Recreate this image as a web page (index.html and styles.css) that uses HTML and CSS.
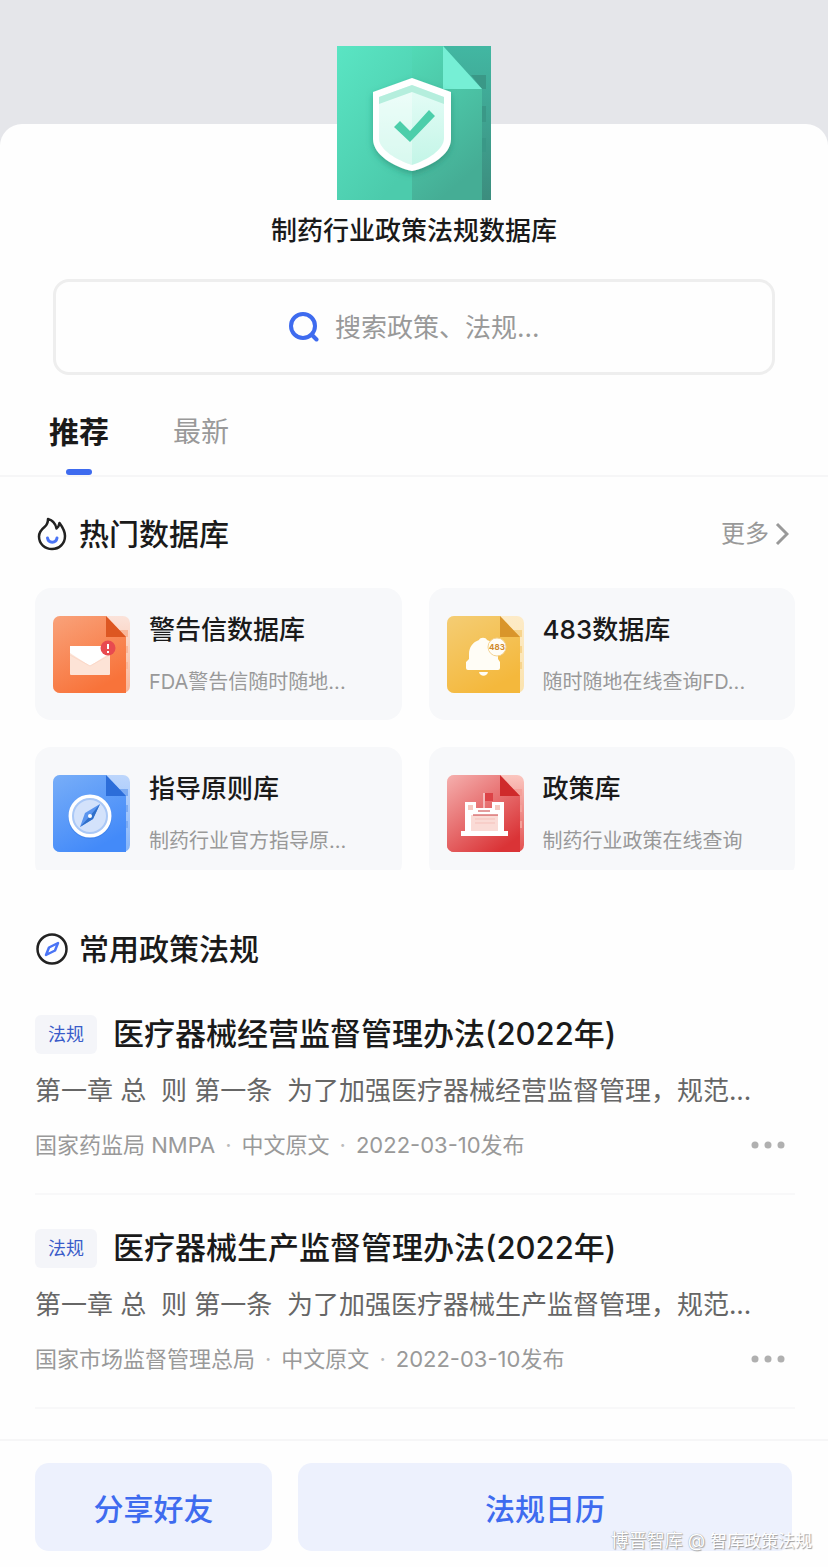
FILE: index.html
```
<!DOCTYPE html>
<html lang="zh-CN">

<head>
    <meta charset="UTF-8">
    <meta name="viewport" content="width=device-width, initial-scale=1.0">
    <title>制药行业政策法规数据库</title>
    <link rel="stylesheet" href="styles.css">
</head>

<body>
    <main class="sheet">
        <!-- logo -->
        <svg class="logo" viewBox="0 0 154 154" aria-hidden="true">
            <defs>
                <linearGradient id="logoLeft" x1="0" y1="0" x2="0.6" y2="1">
                    <stop offset="0" stop-color="#5ae5c3" />
                    <stop offset="1" stop-color="#4ccbac" />
                </linearGradient>
                <linearGradient id="logoRight" x1="0" y1="0" x2="0.4" y2="1">
                    <stop offset="0" stop-color="#52dab6" />
                    <stop offset="1" stop-color="#45ad95" />
                </linearGradient>
                <linearGradient id="logoBack" x1="0" y1="0" x2="0" y2="1">
                    <stop offset="0" stop-color="#42b7a2" />
                    <stop offset="1" stop-color="#3c8d7e" />
                </linearGradient>
                <linearGradient id="shieldFill" x1="0" y1="0" x2="0" y2="1">
                    <stop offset="0" stop-color="#e6fdf7" />
                    <stop offset="1" stop-color="#c3f5e7" />
                </linearGradient>
                <filter id="shieldShadow" x="-20%" y="-20%" width="140%" height="150%">
                    <feDropShadow dx="0" dy="3" stdDeviation="3" flood-color="#1d7d66" flood-opacity="0.5" />
                </filter>
            </defs>
            <rect width="154" height="154" fill="url(#logoBack)" />
            <path d="M134 29h15v14h-4zM145 60h4v16h-4zM145 92h4v14h-4z" fill="#3a9887" />
            <path d="M0 0h75v154H0z" fill="url(#logoLeft)" />
            <path d="M75 0h31l39 43v111H75z" fill="url(#logoRight)" />
            <path d="M106 0l39 43h-39z" fill="#76efd5" />
            <g filter="url(#shieldShadow)">
                <path d="M75 32l39 14v47c0 16-21 28-39 32-18-4-39-16-39-32V46z" fill="#fff" />
            </g>
            <path d="M75 39l32 12v41c0 12-17 22-32 27-15-5-33-15-33-27V51z" fill="url(#shieldFill)" />
            <path d="M75 46v73c-15-5-33-15-33-27V57z" fill="#fff" opacity="0.35" />
            <path d="M75 39l32 12v7L75 46 42 58v-7z" fill="#b5eedd" />
            <path d="M57 81l6-6 10 10 19-21 6 6-25 26z" fill="#4cceaa" />
        </svg>
        <h1 class="app-name">制药行业政策法规数据库</h1>

        <!-- search -->
        <form class="search">
            <label class="search-icon" for="keyword" aria-label="搜索">
                <svg width="30" height="30" viewBox="0 0 30 30" fill="none" stroke="#3e6bef" stroke-width="4" stroke-linecap="round">
                    <circle cx="14" cy="14" r="12" />
                    <path d="M22.500 22.500l5 5" />
                </svg>
            </label>
            <input class="search-input" id="keyword" type="text" placeholder="搜索政策、法规...">
        </form>

        <nav class="tabs">
            <a class="tab active" href="#">推荐</a>
            <a class="tab" href="#">最新</a>
        </nav>

        <!-- hot databases -->
        <section class="hot">
            <div class="section-head">
                <svg width="34" height="34" viewBox="0 0 34 34" fill="none" stroke-width="2.500" stroke-linecap="round" stroke-linejoin="round" aria-hidden="true">
                    <path d="M13 2c4 1 7.500 4.500 8.500 9.500 1.500-1 2.500-2.500 3-5.500 3 4 5.500 8 5.500 13 0 8-6 13-13 13S4 27 4 19.500c0-5 3-7.500 5.500-9.500C12 8 13 5 13 2z" stroke="#222" />
                    <path d="M12.500 21c1 5.500 8.500 5.500 9.500 0" stroke="#4a74f5" stroke-width="3" />
                </svg>
                <h2 class="section-title">热门数据库</h2>
                <a class="more" href="#">更多
                    <svg width="14" height="24" viewBox="0 0 14 24" fill="none" stroke="#999" stroke-width="3" aria-hidden="true">
                        <path d="M2 2l10 10L2 22" />
                    </svg>
                </a>
            </div>

            <div class="cards">
                <a class="card" href="#">
                    <svg class="card-icon" viewBox="0 0 77 77" aria-hidden="true">
                        <defs>
                            <linearGradient id="orange" x1="0" y1="0" x2="0.5" y2="1">
                                <stop offset="0" stop-color="#f9a27a" />
                                <stop offset="1" stop-color="#f8733a" />
                            </linearGradient>
                            <linearGradient id="orangeBack" x1="0" y1="0" x2="0" y2="1">
                                <stop offset="0" stop-color="#fbe3da" />
                                <stop offset="1" stop-color="#fab596" />
                            </linearGradient>
                        </defs>
                        <rect width="77" height="77" rx="7" fill="url(#orangeBack)" />
                        <path d="M66 14h9v7h-9zM72 30h3v7h-3zM72 46h3v7h-3z" fill="#f9b79b" />
                        <path d="M7 0h46l20 21v56H7a7 7 0 0 1-7-7V7a7 7 0 0 1 7-7z" fill="url(#orange)" />
                        <path d="M53 0l20 21H53z" fill="#dd5722" />
                        <rect x="17" y="30" width="40" height="29" rx="1" fill="#fde3d6" />
                        <path d="M17 30h40v7L37 50 17 37z" fill="#fff" />
                        <path d="M17 39l20 11 20-11" fill="none" stroke="#fbd8c8" />
                        <circle cx="55" cy="32" r="7.500" fill="#e84a4f" />
                        <path d="M55 28v5M55 35v2" stroke="#fff" stroke-width="2" />
                    </svg>
                    <div class="card-text">
                        <h3 class="card-title">警告信数据库</h3>
                        <p class="card-desc">FDA警告信随时随地...</p>
                    </div>
                </a>
                <a class="card" href="#">
                    <svg class="card-icon" viewBox="0 0 77 77" aria-hidden="true">
                        <defs>
                            <linearGradient id="yellow" x1="0" y1="0" x2="0.5" y2="1">
                                <stop offset="0" stop-color="#f4cd74" />
                                <stop offset="1" stop-color="#f4b83c" />
                            </linearGradient>
                            <linearGradient id="yellowBack" x1="0" y1="0" x2="0" y2="1">
                                <stop offset="0" stop-color="#fdebc7" />
                                <stop offset="1" stop-color="#fbe3ae" />
                            </linearGradient>
                        </defs>
                        <rect width="77" height="77" rx="7" fill="url(#yellowBack)" />
                        <path d="M66 14h9v7h-9zM72 30h3v7h-3zM72 46h3v7h-3z" fill="#f7d48d" />
                        <path d="M7 0h46l20 21v56H7a7 7 0 0 1-7-7V7a7 7 0 0 1 7-7z" fill="url(#yellow)" />
                        <path d="M53 0l20 21H53z" fill="#d9952b" />
                        <path d="M32 24c1-3 7-3 8 0 7 2 11 7 11 14v5l2 3v6q0 2-2 2H21q-2 0-2-2v-6l3-3v-5c0-7 4-12 10-14z" fill="#fffdf6" />
                        <path d="M32 56h9c-1 5-8 5-9 0z" fill="#fffdf6" />
                        <circle cx="50" cy="31" r="9" fill="#fffdf6" stroke="#f3d394" />
                        <text class="badge-text" x="50" y="34" text-anchor="middle">483</text>
                    </svg>
                    <div class="card-text">
                        <h3 class="card-title">483数据库</h3>
                        <p class="card-desc">随时随地在线查询FD...</p>
                    </div>
                </a>
                <a class="card" href="#">
                    <svg class="card-icon" viewBox="0 0 77 77" aria-hidden="true">
                        <defs>
                            <linearGradient id="blue" x1="0" y1="0" x2="0.5" y2="1">
                                <stop offset="0" stop-color="#78aef8" />
                                <stop offset="1" stop-color="#438af9" />
                            </linearGradient>
                            <linearGradient id="blueBack" x1="0" y1="0" x2="0" y2="1">
                                <stop offset="0" stop-color="#bdd6fc" />
                                <stop offset="1" stop-color="#86b5fa" />
                            </linearGradient>
                        </defs>
                        <rect width="77" height="77" rx="7" fill="url(#blueBack)" />
                        <path d="M66 14h9v7h-9zM72 30h3v7h-3zM72 46h3v7h-3z" fill="#7dabf2" />
                        <path d="M7 0h46l20 21v56H7a7 7 0 0 1-7-7V7a7 7 0 0 1 7-7z" fill="url(#blue)" />
                        <path d="M53 0l20 21H53z" fill="#2c6dd9" />
                        <circle cx="37" cy="42" r="22" fill="#2f70d6" opacity="0.3" />
                        <circle cx="37" cy="41" r="19.500" fill="#d3e2fb" stroke="#fff" stroke-width="4" />
                        <circle cx="37" cy="41" r="17" fill="none" stroke="#aac8f6" stroke-width="2" />
                        <path d="M47 29l-7 15-13 8 5-14z" fill="#5b95ee" />
                        <path d="M47 29l-7 15-13 8 10-11z" fill="#2f6fc9" />
                        <circle cx="37" cy="41" r="2" fill="#fff" />
                    </svg>
                    <div class="card-text">
                        <h3 class="card-title">指导原则库</h3>
                        <p class="card-desc">制药行业官方指导原...</p>
                    </div>
                </a>
                <a class="card" href="#">
                    <svg class="card-icon" viewBox="0 0 77 77" aria-hidden="true">
                        <defs>
                            <linearGradient id="red" x1="0" y1="0" x2="0.7" y2="1">
                                <stop offset="0" stop-color="#f5b0ae" />
                                <stop offset="1" stop-color="#da3336" />
                            </linearGradient>
                            <linearGradient id="redBack" x1="0" y1="0" x2="0" y2="1">
                                <stop offset="0" stop-color="#fbc6bf" />
                                <stop offset="1" stop-color="#e3504f" />
                            </linearGradient>
                        </defs>
                        <rect width="77" height="77" rx="7" fill="url(#redBack)" />
                        <path d="M66 14h9v7h-9zM72 30h3v7h-3zM72 46h3v7h-3z" fill="#f4a099" />
                        <path d="M7 0h46l20 21v56H7a7 7 0 0 1-7-7V7a7 7 0 0 1 7-7z" fill="url(#red)" />
                        <path d="M53 0l20 21H53z" fill="#cf2a2b" />
                        <path d="M38 18h8v8h-8z" fill="#dc4347" />
                        <path d="M37 18v15" stroke="#fff" />
                        <path d="M18 27h11v6h16v-6h12v29h4v5H14v-5h4z" fill="#fff" />
                        <path d="M21 30h5v5h-5zM48 30h5v5h-5z" fill="#f6c9c0" />
                        <path d="M24 40h27v16H24z" fill="#fadbd6" />
                        <path d="M31 36h12M26 40h25" stroke="#c8383b" />
                        <path d="M28 44h20M28 48h20" stroke="#f5c1bb" />
                    </svg>
                    <div class="card-text">
                        <h3 class="card-title">政策库</h3>
                        <p class="card-desc">制药行业政策在线查询</p>
                    </div>
                </a>
            </div>
        </section>

        <!-- common regulations -->
        <section class="laws">
            <div class="section-head">
                <svg width="34" height="34" viewBox="0 0 34 34" fill="none" aria-hidden="true">
                    <circle cx="17" cy="17" r="14.500" stroke="#222" stroke-width="2.500" />
                    <path d="M23 11l-3 7.500L11 23l3-7.500z" stroke="#4a74f5" stroke-width="2.500" stroke-linejoin="round" />
                </svg>
                <h2 class="section-title">常用政策法规</h2>
            </div>

            <article class="law">
                <div class="law-head">
                    <span class="tag">法规</span>
                    <h3 class="law-title">医疗器械经营监督管理办法(2022年)</h3>
                </div>
                <p class="law-desc">第一章 总  则 第一条  为了加强医疗器械经营监督管理，规范...</p>
                <div class="law-foot">
                    <p class="meta">国家药监局 NMPA<i class="dot">·</i>中文原文<i class="dot">·</i>2022-03-10发布</p>
                    <button class="menu" type="button" aria-label="更多操作">
                        <svg width="34" height="8" viewBox="0 0 34 8" fill="#b0b0b0">
                            <circle cx="4" cy="4" r="3.500" />
                            <circle cx="17" cy="4" r="3.500" />
                            <circle cx="30" cy="4" r="3.500" />
                        </svg>
                    </button>
                </div>
            </article>

            <article class="law">
                <div class="law-head">
                    <span class="tag">法规</span>
                    <h3 class="law-title">医疗器械生产监督管理办法(2022年)</h3>
                </div>
                <p class="law-desc">第一章 总  则 第一条  为了加强医疗器械生产监督管理，规范...</p>
                <div class="law-foot">
                    <p class="meta">国家市场监督管理总局<i class="dot">·</i>中文原文<i class="dot">·</i>2022-03-10发布</p>
                    <button class="menu" type="button" aria-label="更多操作">
                        <svg width="34" height="8" viewBox="0 0 34 8" fill="#b0b0b0">
                            <circle cx="4" cy="4" r="3.500" />
                            <circle cx="17" cy="4" r="3.500" />
                            <circle cx="30" cy="4" r="3.500" />
                        </svg>
                    </button>
                </div>
            </article>
        </section>

        <footer class="actions">
            <button class="action share" type="button">分享好友</button>
            <button class="action calendar" type="button">法规日历</button>
            <span class="watermark"><span class="watermark-name">博晋智库 @</span> 智库政策法规</span>
        </footer>
    </main>
</body>

</html>
```
FILE: styles.css
```
* {
    box-sizing: border-box;
}

body {
    margin: 0;
    padding-top: 124px;
    background: #e5e6ea;
    color: #1a1a1a;
    font-family: Inter, "Noto Sans CJK SC", sans-serif;
}

h1, h2, h3, p {
    margin: 0;
    font-weight: 500;
}

a {
    color: inherit;
    text-decoration: none;
}

button, input {
    border: none;
    background: none;
    padding: 0;
    font-family: inherit;
}

svg {
    display: block;
    flex-shrink: 0;
}

.sheet {
    display: flow-root;
    background: #fefefe;
    border-radius: 22px 22px 0 0;
}

/* logo sits half over the grey header */
.logo {
    width: 154px;
    height: 154px;
    margin: -78px auto 0;
}

.app-name {
    margin-top: 11px;
    text-align: center;
    font-size: 26px;
    line-height: 40px;
}

/* search box */
.search {
    display: flex;
    align-items: center;
    justify-content: center;
    gap: 16px;
    height: 96px;
    margin: 28px 53px 0;
    border: 3px solid #eee;
    border-radius: 16px;
}

.search-input {
    width: 204px;
    height: 40px;
    font-size: 26px;
    color: #1a1a1a;
    outline: none;
}

.search-input::placeholder {
    color: #999;
    opacity: 1;
}

/* tabs */
.tabs {
    display: flex;
    gap: 64px;
    margin-top: 34px;
    padding: 0 49px;
    border-bottom: 2px solid #f6f6f7;
}

.tab {
    display: flex;
    flex-direction: column;
    align-items: center;
    height: 66px;
    font-size: 28px;
    line-height: 46px;
    color: #999;
}

.tab.active {
    font-size: 30px;
    font-weight: 700;
    color: #1a1a1a;
}

.tab.active::after {
    content: "";
    width: 26px;
    height: 6px;
    margin-top: 14px;
    border-radius: 3px;
    background: #3e6bef;
}

/* sections */
.hot, .laws {
    padding: 0 33px 0 35px;
}

.section-head {
    display: flex;
    align-items: center;
    gap: 10px;
    height: 44px;
}

.hot .section-head {
    margin-top: 35px;
}

.section-title {
    font-size: 30px;
    line-height: 44px;
}

.more {
    display: flex;
    align-items: center;
    gap: 6px;
    margin-left: auto;
    padding-right: 6px;
    font-size: 24px;
    line-height: 36px;
    color: #999;
}

/* database cards, second row is cut off */
.cards {
    display: grid;
    grid-template-columns: 1fr 1fr;
    grid-auto-rows: 132px;
    gap: 27px;
    height: 282px;
    margin-top: 32px;
    overflow: hidden;
}

.card {
    display: flex;
    align-items: center;
    gap: 19px;
    padding: 0 18px;
    background: #f7f8fa;
    border-radius: 16px;
}

.card-icon {
    width: 77px;
    height: 77px;
}

.badge-text {
    font-size: 8px;
    font-weight: 700;
    fill: #d08a2c;
}

.card-title {
    font-size: 26px;
    line-height: 40px;
}

.card-desc {
    margin-top: 16px;
    font-size: 20px;
    font-weight: 400;
    line-height: 32px;
    color: #999;
    white-space: nowrap;
}

/* regulation list */
.laws {
    margin-top: 57px;
}

.law {
    padding: 31px 0;
    border-bottom: 2px solid #f8f8f9;
}

.laws .section-head + .law {
    padding-top: 41px;
}

.law-head {
    display: flex;
    align-items: center;
    gap: 16px;
    height: 44px;
}

.tag {
    width: 62px;
    border-radius: 6px;
    background: #f4f5f9;
    text-align: center;
    font-size: 18px;
    line-height: 39px;
    color: #3a5cc9;
}

.law-title {
    font-size: 31px;
    line-height: 44px;
}

.law-desc {
    margin-top: 15px;
    font-size: 26px;
    font-weight: 400;
    line-height: 40px;
    color: #666;
    white-space: pre;
}

.law-foot {
    display: flex;
    align-items: center;
    justify-content: space-between;
    margin-top: 17px;
    padding-right: 10px;
}

.meta {
    font-size: 22px;
    font-weight: 400;
    line-height: 34px;
    color: #999;
}

.dot {
    margin: 0 10px;
    font-style: normal;
    color: #bbb;
}

/* bottom bar */
.actions {
    position: relative;
    display: flex;
    gap: 26px;
    margin-top: 30px;
    padding: 22px 36px 16px 35px;
    border-top: 2px solid #f6f6f7;
}

.action {
    height: 88px;
    border-radius: 14px;
    background: #edf1fd;
    font-size: 30px;
    font-weight: 500;
    color: #3e6bef;
}

.share {
    flex: 12;
}

.calendar {
    flex: 25;
}

.watermark {
    position: absolute;
    right: 16px;
    bottom: 12px;
    font-size: 17px;
    line-height: 28px;
    color: #fff;
    text-shadow: 1px 1px 1px #999;
}

.watermark-name {
    font-size: 18px;
    text-shadow: 0 0 1px #888, 1px 1px 1px #aaa;
}
```
